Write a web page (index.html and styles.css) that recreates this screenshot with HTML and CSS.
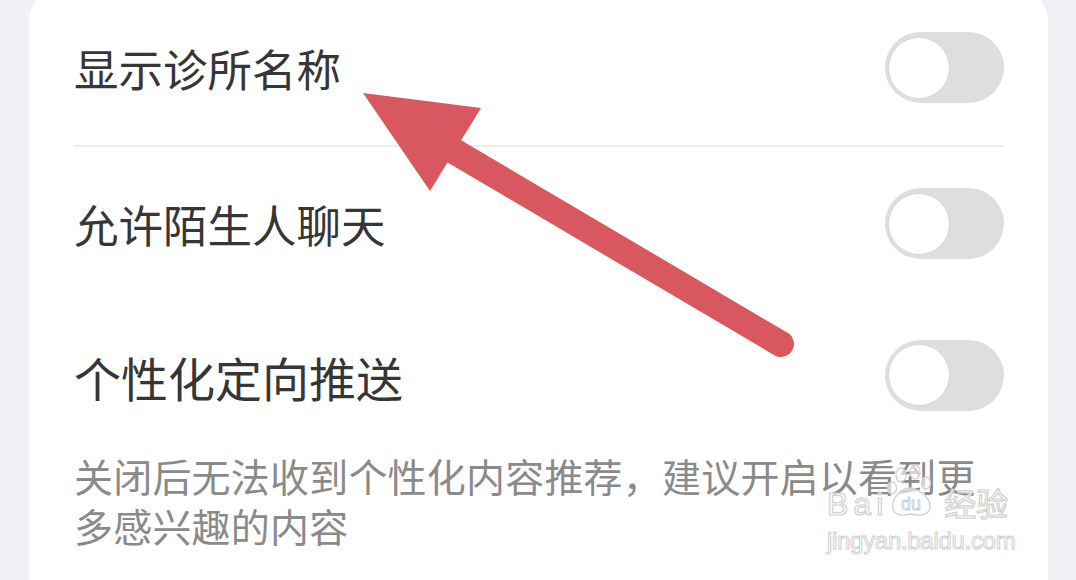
FILE: index.html
```html
<!DOCTYPE html>
<html lang="zh-CN">
<head>
<meta charset="utf-8">
<link rel="stylesheet" href="styles.css">
</head>
<body>
<div class="page">
  <div class="card">
    <div class="row row-first">
      <span class="label">显示诊所名称</span>
      <span class="switch"><span class="knob"></span></span>
    </div>
    <div class="divider"></div>
    <div class="row row-second">
      <span class="label">允许陌生人聊天</span>
      <span class="switch"><span class="knob"></span></span>
    </div>
    <div class="row row-third">
      <span class="label label-big">个性化定向推送</span>
      <span class="switch"><span class="knob"></span></span>
    </div>
    <p class="desc">关闭后无法收到个性化内容推荐，建议开启以看到更<br>多感兴趣的内容</p>
  </div>

  <svg class="arrow" width="1076" height="580" viewBox="0 0 1076 580">
    <line x1="452" y1="150" x2="781" y2="344" stroke="#d9575f" stroke-width="26" stroke-linecap="round"/>
    <polygon points="363,93 481,108 430,191" fill="#d9575f"/>
  </svg>

  <div class="watermark">
    <div class="wm-top">
      <span class="wm-bai">Bai</span>
      <span class="wm-paw">
        <svg width="48" height="54" viewBox="0 0 48 54">
          <g fill="#fff" fill-opacity="0.6" stroke="#d2d2d2" stroke-width="1.3">
            <ellipse cx="15" cy="11" rx="5" ry="7"/>
            <ellipse cx="29" cy="8" rx="5" ry="7"/>
            <ellipse cx="6" cy="24" rx="4.5" ry="6"/>
            <ellipse cx="40" cy="19" rx="4.5" ry="6"/>
            <path d="M7 44 C5 35 14 26 23 24 C32 24 44 33 44 42 C44 52 33 52 25 50 C17 52 8 52 7 44 Z"/>
          </g>
          <text x="25" y="46" text-anchor="middle" class="wm-du">du</text>
        </svg>
      </span>
      <span class="wm-jy">经验</span>
    </div>
    <div class="wm-url">jingyan.baidu.com</div>
  </div>
</div>
</body>
</html>
```
FILE: styles.css
```css
html, body {
  margin: 0;
  padding: 0;
  background: #f1f1f5;
  overflow: hidden;
}

.page {
  position: relative;
  width: 1076px;
  height: 580px;
  overflow: hidden;
  font-family: "Noto Sans CJK SC", "Noto Sans", sans-serif;
}

.card {
  margin: -10px 28px 0 29px;
  background: #ffffff;
  border-radius: 30px;
  padding: 0 44px 40px 45px;
  height: 640px;
  box-sizing: border-box;
}

.row {
  display: flex;
  align-items: center;
  justify-content: space-between;
}

.row-first { height: 155px; }
.row-second { height: 153px; }
.row-third { height: 150px; }

.label {
  font-size: 44.5px;
  color: #363636;
  line-height: 1;
  padding-top: 2px;
}

.label-big {
  font-size: 47px;
}

.divider {
  height: 2px;
  background: #ececec;
}

.switch {
  width: 119px;
  height: 71px;
  border-radius: 36px;
  background: #dedede;
  display: flex;
  align-items: center;
  padding-left: 3px;
  box-sizing: border-box;
}

.knob {
  width: 62px;
  height: 62px;
  border-radius: 50%;
  background: #ffffff;
  border: 1px solid #d8d8d8;
  box-sizing: border-box;
}

.desc {
  margin: 0;
  font-size: 39px;
  line-height: 50px;
  color: #8a8a8a;
  letter-spacing: 0.2px;
}

.arrow {
  position: absolute;
  left: 0;
  top: 0;
}

.watermark {
  position: absolute;
  left: 827px;
  top: 462px;
  width: 200px;
}

.wm-top {
  display: flex;
  align-items: flex-end;
  height: 56px;
}

.wm-bai {
  font-family: "Liberation Sans", sans-serif;
  font-size: 32px;
  line-height: 28px;
  letter-spacing: 5px;
  color: rgba(255, 255, 255, 0.7);
  -webkit-text-stroke: 1.2px #d0d0d0;
}

.wm-paw {
  display: block;
  width: 48px;
  height: 54px;
  margin-left: -2px;
}

.wm-paw svg { display: block; }

.wm-du {
  font-family: "Liberation Sans", sans-serif;
  font-size: 18px;
  fill: rgba(255, 255, 255, 0.7);
  stroke: #cccccc;
  stroke-width: 0.9px;
}

.wm-jy {
  font-family: "Noto Sans CJK SC", sans-serif;
  font-size: 32px;
  line-height: 32px;
  margin-left: 10px;
  color: rgba(255, 255, 255, 0.7);
  -webkit-text-stroke: 1.2px #d0d0d0;
}

.wm-url {
  font-family: "Liberation Sans", sans-serif;
  font-size: 24px;
  line-height: 26px;
  color: rgba(255, 255, 255, 0.7);
  -webkit-text-stroke: 1px #d0d0d0;
  margin-top: 10px;
  letter-spacing: -0.3px;
}
```
